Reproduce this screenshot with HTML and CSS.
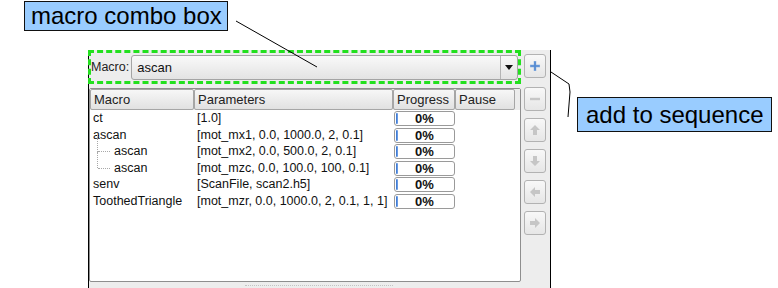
FILE: index.html
```html
<!DOCTYPE html>
<html lang="en">
<head>
    <meta charset="UTF-8">
    <title>Macro sequence</title>
    <link rel="stylesheet" href="styles.css">
</head>
<body>
    <div class="scene">
        <div class="callout callout-combo">macro combo box</div>
        <div class="callout callout-add">add to sequence</div>
        <svg class="leaders" width="778" height="288">
            <line x1="236" y1="21" x2="317" y2="67" />
            <polyline points="551,72 569,84 570,92 568,117" />
        </svg>

        <div class="panel">
            <div class="main">
                <div class="combo-row">
                    <span class="combo-label">Macro:</span>
                    <div class="combo">
                        <span class="combo-text">ascan</span>
                        <span class="combo-drop">
                            <svg width="8" height="5" viewBox="0 0 8 5"><path d="M0 0h8L4 5z" fill="#111"/></svg>
                        </span>
                    </div>
                </div>

                <div class="tree">
                    <div class="tree-head">
                        <div class="head-cell">Macro</div>
                        <div class="head-cell">Parameters</div>
                        <div class="head-cell">Progress</div>
                        <div class="head-cell">Pause</div>
                    </div>
                    <div class="tree-body">
                        <div class="tree-row">
                            <div class="cell">ct</div>
                            <div class="cell">[1.0]</div>
                            <div class="cell"><div class="bar"><span class="chunk"></span>0%</div></div>
                            <div class="cell"></div>
                        </div>
                        <div class="tree-row">
                            <div class="cell">ascan</div>
                            <div class="cell">[mot_mx1, 0.0, 1000.0, 2, 0.1]</div>
                            <div class="cell"><div class="bar"><span class="chunk"></span>0%</div></div>
                            <div class="cell"></div>
                        </div>
                        <div class="tree-row">
                            <div class="cell child">ascan</div>
                            <div class="cell">[mot_mx2, 0.0, 500.0, 2, 0.1]</div>
                            <div class="cell"><div class="bar"><span class="chunk"></span>0%</div></div>
                            <div class="cell"></div>
                        </div>
                        <div class="tree-row">
                            <div class="cell child last">ascan</div>
                            <div class="cell">[mot_mzc, 0.0, 100.0, 100, 0.1]</div>
                            <div class="cell"><div class="bar"><span class="chunk"></span>0%</div></div>
                            <div class="cell"></div>
                        </div>
                        <div class="tree-row">
                            <div class="cell">senv</div>
                            <div class="cell">[ScanFile, scan2.h5]</div>
                            <div class="cell"><div class="bar"><span class="chunk"></span>0%</div></div>
                            <div class="cell"></div>
                        </div>
                        <div class="tree-row">
                            <div class="cell">ToothedTriangle</div>
                            <div class="cell">[mot_mzr, 0.0, 1000.0, 2, 0.1, 1, 1]</div>
                            <div class="cell"><div class="bar"><span class="chunk"></span>0%</div></div>
                            <div class="cell"></div>
                        </div>
                    </div>
                </div>

                <div class="splitter"></div>
            </div>

            <div class="buttons">
                <div class="tool-btn btn-add">
                    <svg width="10" height="10" viewBox="0 0 10 10"><path d="M3.8 0h2.4v3.8H10v2.4H6.2V10H3.8V6.2H0V3.8h3.8z" fill="#78a4dc"/><path d="M4.4 1h1.2v3.4H9v1.2H5.6V9H4.4V5.6H1V4.4h3.4z" fill="#4f86cf"/></svg>
                </div>
                <div class="tool-btn btn-gap">
                    <svg width="10" height="10" viewBox="0 0 10 10"><path d="M0 3.8h10v2.4H0z" fill="#c6c6c6"/></svg>
                </div>
                <div class="tool-btn">
                    <svg width="10" height="10" viewBox="0 0 10 10"><path d="M5 0l5 5H7v5H3V5H0z" fill="#c6c6c6"/></svg>
                </div>
                <div class="tool-btn">
                    <svg width="10" height="10" viewBox="0 0 10 10"><path d="M5 10l5-5H7V0H3v5H0z" fill="#c6c6c6"/></svg>
                </div>
                <div class="tool-btn">
                    <svg width="10" height="10" viewBox="0 0 10 10"><path d="M0 5l5-5v3h5v4H5v3z" fill="#c6c6c6"/></svg>
                </div>
                <div class="tool-btn">
                    <svg width="10" height="10" viewBox="0 0 10 10"><path d="M10 5L5 0v3H0v4h5v3z" fill="#c6c6c6"/></svg>
                </div>
            </div>
        </div>
    </div>
</body>
</html>
```

FILE: styles.css
```css
* {
    margin: 0;
    padding: 0;
    box-sizing: border-box;
}

body {
    font-family: "Liberation Sans", Arial, sans-serif;
    background-color: #fff;
    color: #111;
}

.scene {
    position: relative;
    width: 778px;
    height: 288px;
    overflow: hidden;
    padding-top: 50px;
    padding-left: 88px;
}

/* annotation boxes on top of the screenshot */
.callout {
    position: absolute;
    background-color: #99ccff;
    border: 1px solid #111;
    font-size: 24px;
    line-height: 28px;
    color: #000;
    padding: 0 0 0 6px;
    white-space: nowrap;
    z-index: 2;
}

.callout-combo {
    left: 24px;
    top: 1px;
    width: 204px;
    height: 30px;
}

.callout-add {
    left: 577px;
    top: 97px;
    width: 195px;
    height: 35px;
    padding: 3px 0 0 8px;
}

.leaders {
    position: absolute;
    left: 0;
    top: 0;
    pointer-events: none;
    z-index: 2;
}

.leaders line,
.leaders polyline {
    stroke: #000;
    stroke-width: 1;
    fill: none;
}

/* the widget */
.panel {
    display: flex;
    width: 463px;
    height: 238px;
    background-color: #ededed;
    border-left: 1px solid #000;
    border-right: 1px solid #000;
    font-size: 12.5px;
}

.main {
    width: 432px;
    display: flex;
    flex-direction: column;
}

.combo-row {
    display: flex;
    align-items: center;
    height: 34px;
    margin-left: -1px;
    border: 3px dashed #22e01e;
}

.combo-label {
    color: #222;
    margin-right: 2px;
}

.combo {
    flex: 1;
    display: flex;
    align-items: stretch;
    height: 25px;
    border: 1px solid #a4a4a4;
    border-radius: 3px;
    background: linear-gradient(#f9f9f9, #e3e3e3);
}

.combo-text {
    flex: 1;
    padding-left: 5px;
    line-height: 23px;
    font-size: 13px;
    color: #111;
}

.combo-drop {
    width: 17px;
    display: flex;
    align-items: center;
    justify-content: center;
    border-left: 1px solid #b4b4b4;
}

.tree {
    margin-top: 4px;
    height: 194px;
    background-color: #fff;
    border: 1px solid #8e8e8e;
    border-radius: 2px;
}

.tree-head,
.tree-row {
    display: grid;
    grid-template-columns: 104px 199px 62px 60px;
}

.tree-head {
    height: 21px;
    background-color: #ececec;
}

.head-cell {
    border: 1px solid #a6a6a6;
    border-radius: 2px;
    background: linear-gradient(#f7f7f7, #e1e1e1);
    padding-left: 3px;
    line-height: 19px;
    font-size: 13px;
    color: #222;
}

.tree-row {
    height: 16.6px;
    line-height: 16.6px;
}

.cell {
    padding-left: 3px;
    white-space: nowrap;
    color: #111;
    position: relative;
}

.cell.child {
    padding-left: 24px;
}

/* dotted branch lines of the tree */
.cell.child::before {
    content: "";
    position: absolute;
    left: 7px;
    top: -8px;
    height: 16.6px;
    border-left: 1px dotted #a8a8a8;
}

.cell.child::after {
    content: "";
    position: absolute;
    left: 8px;
    top: 8px;
    width: 12px;
    border-top: 1px dotted #a8a8a8;
}

.cell.last::before {
    height: 16px;
}

.tree-row .cell:nth-child(3) {
    padding-left: 0;
}

.bar {
    position: relative;
    width: 61px;
    height: 15px;
    margin: 1px 0 0 1px;
    border: 1px solid #9a9a9a;
    border-radius: 3px;
    background-color: #fff;
    text-align: center;
    font-weight: bold;
    font-size: 13px;
    line-height: 13px;
    color: #111;
}

.chunk {
    position: absolute;
    left: 1px;
    top: 1px;
    width: 2px;
    height: 11px;
    border-radius: 1px;
    background: linear-gradient(90deg, #2f6fd0, #7aa8e8);
}

.splitter {
    margin: 3px 0 0 156px;
    width: 148px;
    height: 1px;
    border-top: 1px dotted #c4c4c4;
}

.buttons {
    display: flex;
    flex-direction: column;
    padding-left: 3px;
    padding-top: 4px;
}

.tool-btn {
    width: 22px;
    height: 24px;
    margin-top: 7px;
    display: flex;
    align-items: center;
    justify-content: center;
    border: 1px solid #b2b2b2;
    border-radius: 3px;
    background: linear-gradient(#f8f8f8, #e6e6e6);
}

.tool-btn.btn-add {
    margin-top: 0;
}

.tool-btn.btn-gap {
    margin-top: 9px;
}
```
